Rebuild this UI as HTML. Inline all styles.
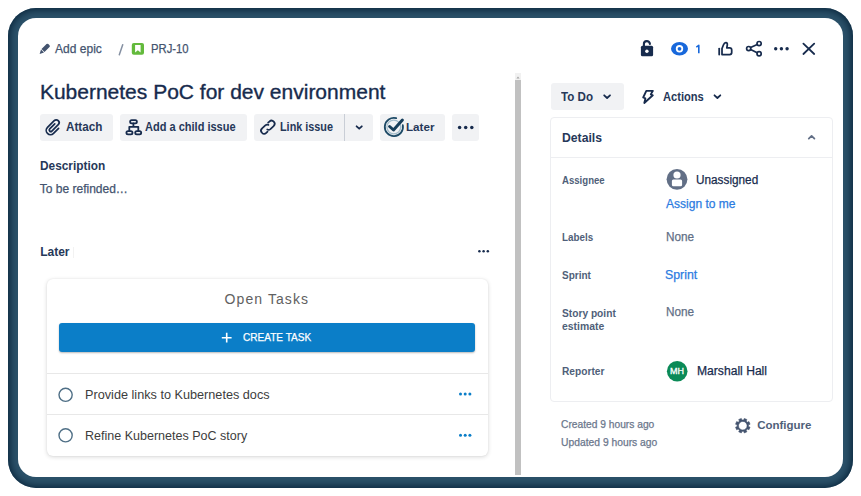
<!DOCTYPE html>
<html><head><meta charset="utf-8">
<style>
*{margin:0;padding:0;box-sizing:border-box}
html,body{width:861px;height:496px;overflow:hidden;background:#fff;-webkit-font-smoothing:antialiased;font-family:"Liberation Sans",sans-serif;color:#172b4d}
.a{position:absolute;white-space:nowrap;line-height:1;transform-origin:0 0}
.r{position:absolute}
.btn{position:absolute;background:#f1f2f4;border-radius:3px}
</style></head><body>
<div class="r" style="left:8px;top:8px;width:845px;height:480px;border-radius:28px;background:#2b5169;box-shadow:inset 0 0 7px 2px rgba(8,36,58,.95)"></div>

<div class="r" style="left:18px;top:18px;width:825px;height:459px;border-radius:18px;background:#fff"></div>
<!-- buttons -->
<div class="btn" style="left:40px;top:113.6px;width:72.6px;height:27.1px"></div>
<div class="btn" style="left:119.9px;top:113.6px;width:127.1px;height:27.1px"></div>
<div class="btn" style="left:254px;top:113.6px;width:118.7px;height:27.1px"></div>
<div class="r" style="left:344.2px;top:113.6px;width:1px;height:27.1px;background:#c9ced6"></div>
<div class="btn" style="left:380.1px;top:113.6px;width:64.9px;height:27.1px"></div>
<div class="btn" style="left:452.4px;top:113.6px;width:26.8px;height:27.1px"></div>
<!-- scrollbar -->
<div class="r" style="left:515px;top:73px;width:6px;height:7px;background:#f1f1f1"></div>
<div class="r" style="left:515px;top:80px;width:6px;height:395px;background:#c1c1c1"></div>
<!-- card -->
<div class="r" style="left:47px;top:279px;width:440.5px;height:177px;background:#fff;border-radius:6px;box-shadow:0 1px 4px rgba(0,0,0,.16),0 0 2px rgba(0,0,0,.06)"></div>
<div class="r" style="left:58.5px;top:323px;width:416.7px;height:29.3px;background:#0b7ec8;border-radius:3px;box-shadow:0 1px 2px rgba(0,0,0,.28)"></div>
<div class="r" style="left:47px;top:373px;width:440.5px;height:1px;background:#e8e8e8"></div>
<div class="r" style="left:47px;top:414px;width:440.5px;height:1px;background:#e8e8e8"></div>
<!-- right -->
<div class="btn" style="left:550.9px;top:82.9px;width:73.4px;height:27.1px"></div>
<div class="r" style="left:550.4px;top:117.2px;width:282.4px;height:284.4px;border:1px solid #edeef1;border-radius:4px"></div>
<div class="r" style="left:551px;top:157px;width:281px;height:1px;background:#edeef1"></div>

<div class="r" style="left:73px;top:246.5px;width:1px;height:11.5px;background:#f2f2f2"></div>

<div class="a" style="left:55.10px;top:43.14px;font-size:12px;color:#44546f;-webkit-text-stroke:0.25px #44546f;">Add epic</div>
<div class="a" style="left:151.40px;top:43.14px;font-size:12px;color:#44546f;transform:scaleX(0.940);-webkit-text-stroke:0.25px #44546f;">PRJ-10</div>
<div class="a" style="left:39.90px;top:81.02px;font-size:21px;color:#172b4d;-webkit-text-stroke:0.35px #172b4d;">Kubernetes PoC for dev environment</div>
<div class="a" style="left:65.60px;top:121.04px;font-size:12px;color:#263859;font-weight:bold;transform:scaleX(0.975);">Attach</div>
<div class="a" style="left:145.40px;top:121.04px;font-size:12px;color:#263859;font-weight:bold;transform:scaleX(0.918);">Add a child issue</div>
<div class="a" style="left:280.20px;top:121.04px;font-size:12px;color:#263859;font-weight:bold;transform:scaleX(0.903);">Link issue</div>
<div class="a" style="left:406.00px;top:121.89px;font-size:11px;color:#263859;font-weight:bold;transform:scaleX(1.059);">Later</div>
<div class="a" style="left:39.80px;top:159.84px;font-size:12px;color:#263859;font-weight:bold;transform:scaleX(0.988);">Description</div>
<div class="a" style="left:39.80px;top:183.34px;font-size:12px;color:#44546f;-webkit-text-stroke:0.25px #44546f;">To be refinded…</div>
<div class="a" style="left:40.20px;top:245.74px;font-size:12px;color:#263859;font-weight:bold;">Later</div>
<div class="a" style="left:224.60px;top:292.25px;font-size:14px;color:#616161;letter-spacing:1.08px;">Open Tasks</div>
<div class="a" style="left:242.80px;top:332.09px;font-size:11px;color:#ffffff;transform:scaleX(0.915);-webkit-text-stroke:0.25px #fff;">CREATE TASK</div>
<div class="a" style="left:84.90px;top:387.80px;font-size:13px;color:#3d3d3d;transform:scaleX(0.975);">Provide links to Kubernetes docs</div>
<div class="a" style="left:84.90px;top:428.50px;font-size:13px;color:#3d3d3d;transform:scaleX(0.963);">Refine Kubernetes PoC story</div>
<div class="a" style="left:561.00px;top:91.04px;font-size:12px;color:#263859;font-weight:bold;transform:scaleX(0.967);">To Do</div>
<div class="a" style="left:662.50px;top:91.04px;font-size:12px;color:#263859;font-weight:bold;transform:scaleX(0.927);">Actions</div>
<div class="a" style="left:561.70px;top:131.84px;font-size:12px;color:#263859;font-weight:bold;transform:scaleX(1.017);">Details</div>
<div class="a" style="left:562.10px;top:174.71px;font-size:10.5px;color:#505f79;font-weight:bold;transform:scaleX(0.914);">Assignee</div>
<div class="a" style="left:696.20px;top:173.72px;font-size:12.5px;color:#172b4d;transform:scaleX(0.942);-webkit-text-stroke:0.25px #172b4d;">Unassigned</div>
<div class="a" style="left:665.80px;top:198.12px;font-size:12.5px;color:#2b7be1;transform:scaleX(0.962);-webkit-text-stroke:0.25px #2b7be1;">Assign to me</div>
<div class="a" style="left:561.50px;top:232.31px;font-size:10.5px;color:#505f79;font-weight:bold;transform:scaleX(0.935);">Labels</div>
<div class="a" style="left:665.90px;top:230.62px;font-size:12.5px;color:#626f86;transform:scaleX(0.940);-webkit-text-stroke:0.25px #626f86;">None</div>
<div class="a" style="left:561.50px;top:270.01px;font-size:10.5px;color:#505f79;font-weight:bold;transform:scaleX(0.952);">Sprint</div>
<div class="a" style="left:665.40px;top:268.82px;font-size:12.5px;color:#2b7be1;transform:scaleX(0.986);-webkit-text-stroke:0.25px #2b7be1;">Sprint</div>
<div class="a" style="left:561.50px;top:307.81px;font-size:10.5px;color:#505f79;font-weight:bold;transform:scaleX(0.971);">Story point</div>
<div class="a" style="left:561.50px;top:321.11px;font-size:10.5px;color:#505f79;font-weight:bold;transform:scaleX(0.991);">estimate</div>
<div class="a" style="left:665.90px;top:306.12px;font-size:12.5px;color:#626f86;transform:scaleX(0.940);-webkit-text-stroke:0.25px #626f86;">None</div>
<div class="a" style="left:561.80px;top:366.31px;font-size:10.5px;color:#505f79;font-weight:bold;transform:scaleX(0.969);">Reporter</div>
<div class="a" style="left:696.70px;top:364.62px;font-size:12.5px;color:#172b4d;transform:scaleX(0.969);-webkit-text-stroke:0.25px #172b4d;">Marshall Hall</div>
<div class="a" style="left:561.10px;top:419.88px;font-size:10.3px;color:#6b778c;transform:scaleX(0.994);-webkit-text-stroke:0.25px #6b778c;">Created 9 hours ago</div>
<div class="a" style="left:561.10px;top:438.08px;font-size:10.3px;color:#6b778c;-webkit-text-stroke:0.25px #6b778c;">Updated 9 hours ago</div>
<div class="a" style="left:757.20px;top:420.07px;font-size:11.5px;color:#505f79;font-weight:bold;">Configure</div>
<svg class="r" style="left:0;top:0" width="861" height="496" viewBox="0 0 861 496" fill="none">
<!-- pencil -->
<g fill="#44546f" transform="translate(-0.8,0.8)"><path d="M42.3 48.3 L47.3 43.3 Q48.2 42.4 49.1 43.3 L50.3 44.5 Q51.2 45.4 50.3 46.3 L45.3 51.3 Z"/><path d="M41.8 48.8 L44.8 51.8 L40.4 53.3 Z"/></g>
<path d="M122.7 44.8 L119.3 54.8" stroke="#8590a2" stroke-width="1.5" stroke-linecap="round"/>
<!-- story icon -->
<rect x="131.8" y="42.9" width="12.2" height="11.8" rx="2" fill="#63ba3c"/>
<path d="M135.1 45 H140.6 V52.5 L137.85 50.3 L135.1 52.5 Z" fill="#fff"/>
<!-- title row icons -->
<g stroke="#172b4d" stroke-width="1.8" stroke-linecap="round" stroke-linejoin="round">
 <!-- paperclip -->
 <g transform="translate(53,126.8) rotate(45) scale(-0.95,0.95)">
  <path d="M0.9 -3.5 V4 A1.6 1.6 0 0 1 -2.3 4 V-5.5 A3 3 0 0 1 3.7 -5.5 V4.5 A4.5 4.5 0 0 1 -5.3 4.5 V-3"/>
 </g>
 <!-- hierarchy -->
 <rect x="130.1" y="120.2" width="6.8" height="3.2" rx="1.6"/>
 <rect x="126.4" y="131.2" width="6.1" height="3.2" rx="1.6"/>
 <rect x="135.2" y="131.2" width="6" height="3.2" rx="1.6"/>
 <path d="M133.4 123.4 V126.8 M129.3 131.2 V126.8 H138.3 V131.2"/>
 <!-- link -->
 <g transform="translate(267.85,127.2) rotate(-43)" stroke-width="1.75">
  <path d="M2 -1.3 A3.1 3.1 0 0 0 -0.6 -3.1 H-5 A3.1 3.1 0 0 0 -5 3.1 H-3.3"/>
  <path d="M-2 1.3 A3.1 3.1 0 0 0 0.6 3.1 H5 A3.1 3.1 0 0 0 5 -3.1 H3.3"/>
 </g>
 <!-- chevron link -->
 <path d="M356.6 126.3 L359.2 128.7 L361.8 126.3"/>
 <!-- chevrons right -->
 <path d="M604.2 95.3 L607.1 98 L610 95.3"/>
 <path d="M714.5 95.3 L717.4 98 L720.3 95.3"/>
 <!-- lightning -->
 <path d="M646.3 90.8 H652.9 L650.8 94.4 L652.8 95.3 L644.3 103 L645.4 98.4 L643.2 97.5 Z" stroke-width="1.85"/>
 <!-- thumbs -->
 <path d="M719.2 48.6 V54.6"/>
 <path d="M722 54.6 V48.5 L723.5 44.7 Q724.4 42.5 725.9 42.6 Q727.6 42.8 727.3 45 L726.8 47.8 H729.6 Q731.7 47.8 731.7 49.9 V52.6 Q731.7 54.6 729.6 54.6 Z" stroke-width="1.75"/>
 <!-- share -->
 <g stroke-width="1.7"><circle cx="748.7" cy="48.6" r="2.1"/><circle cx="759.1" cy="43.6" r="2.1"/><circle cx="759.1" cy="53.8" r="2.1"/><path d="M750.6 47.6 L757.2 44.5 M750.6 49.6 L757.2 52.8"/></g>
 <!-- X -->
 <path d="M803.4 43.7 L814.2 54 M814.2 43.7 L803.4 54"/>
</g>
<!-- later icon -->
<path d="M402.8 125.2 A9.1 9.1 0 1 1 396.2 118.2" stroke="#1d4a66" stroke-width="1.8" stroke-linecap="round"/>
<circle cx="393.8" cy="127" r="6.9" stroke="#a3bccb" stroke-width="1.3"/>
<path d="M389.6 126.5 L393.5 130 L402.4 120" stroke="#173e5a" stroke-width="3" stroke-linecap="round" stroke-linejoin="round"/>
<!-- more dots button -->
<g fill="#172b4d"><circle cx="459.6" cy="127.5" r="1.75"/><circle cx="465.7" cy="127.5" r="1.75"/><circle cx="471.8" cy="127.5" r="1.75"/></g>
<!-- later heading dots -->
<g fill="#172b4d"><circle cx="479.4" cy="251.3" r="1.25"/><circle cx="483.6" cy="251.3" r="1.25"/><circle cx="487.8" cy="251.3" r="1.25"/></g>
<!-- top dots -->
<g fill="#172b4d"><circle cx="775.7" cy="48.8" r="1.7"/><circle cx="781.4" cy="48.8" r="1.7"/><circle cx="787.1" cy="48.8" r="1.7"/></g>
<!-- lock -->
<path d="M643.9 46 V44.3 A3 3 0 0 1 649.9 43.9 V44" stroke="#172b4d" stroke-width="2.1" stroke-linecap="round"/>
<rect x="640.9" y="45.8" width="12.2" height="10.4" rx="1.5" fill="#172b4d"/>
<circle cx="646.9" cy="51.2" r="1.7" fill="#fff"/>
<path d="M698.8 53.2 V45.4 L696.3 47.1" stroke="#1868db" stroke-width="1.6" stroke-linejoin="round"/>
<!-- eye -->
<ellipse cx="679.5" cy="48.8" rx="8.5" ry="6.7" fill="#1868db"/>
<circle cx="679.5" cy="48.8" r="2.8" stroke="#fff" stroke-width="1.8"/>
<!-- tasks circles -->
<g stroke="#4f6f86" stroke-width="1.4"><circle cx="65.6" cy="394.8" r="6.6"/><circle cx="65.6" cy="435.3" r="6.6"/></g>
<!-- task dots -->
<g fill="#0b7ec8"><circle cx="460.5" cy="394.1" r="1.5"/><circle cx="465.2" cy="394.1" r="1.5"/><circle cx="469.9" cy="394.1" r="1.5"/><circle cx="460.5" cy="435.3" r="1.5"/><circle cx="465.2" cy="435.3" r="1.5"/><circle cx="469.9" cy="435.3" r="1.5"/></g>
<path d="M516.4 78.6 L518 76.4 L519.6 78.6 Z" fill="#a3a3a3"/>
<!-- plus -->
<path d="M226.7 332.8 V342.6 M221.8 337.7 H231.6" stroke="#fff" stroke-width="1.6"/>
<!-- details caret -->
<path d="M808.8 138.6 L811.6 135.9 L814.4 138.6" stroke="#626f86" stroke-width="1.8" stroke-linecap="round" stroke-linejoin="round"/>
<!-- assignee avatar -->
<circle cx="677" cy="179.3" r="10.4" fill="#626f86"/>
<circle cx="677" cy="175" r="3.6" fill="#fff"/>
<rect x="671.9" y="179.6" width="10.2" height="6.7" rx="1.5" fill="#fff"/>
<!-- reporter avatar -->
<circle cx="677.2" cy="371.2" r="10.3" fill="#0b8a57"/>
<text x="677.1" y="374.2" text-anchor="middle" font-family="Liberation Sans" font-size="9" fill="#fff" stroke="#fff" stroke-width="0.3">MH</text>
<!-- gear -->
<g transform="translate(742.8,425.7)" fill="#44546f" stroke="#44546f" stroke-width="0.6" stroke-linejoin="round">
 <path fill-rule="evenodd" d="M0.84 -5.64 L1.48 -7.25 L4.08 -6.17 L3.39 -4.58 L4.58 -3.39 L6.17 -4.08 L7.25 -1.48 L5.64 -0.84 L5.64 0.84 L7.25 1.48 L6.17 4.08 L4.58 3.39 L3.39 4.58 L4.08 6.17 L1.48 7.25 L0.84 5.64 L-0.84 5.64 L-1.48 7.25 L-4.08 6.17 L-3.39 4.58 L-4.58 3.39 L-6.17 4.08 L-7.25 1.48 L-5.64 0.84 L-5.64 -0.84 L-7.25 -1.48 L-6.17 -4.08 L-4.58 -3.39 L-3.39 -4.58 L-4.08 -6.17 L-1.48 -7.25 L-0.84 -5.64 Z M4.3 0 A4.3 4.3 0 1 0 -4.3 0 A4.3 4.3 0 1 0 4.3 0 Z"/>
</g>
</svg>

</body></html>
